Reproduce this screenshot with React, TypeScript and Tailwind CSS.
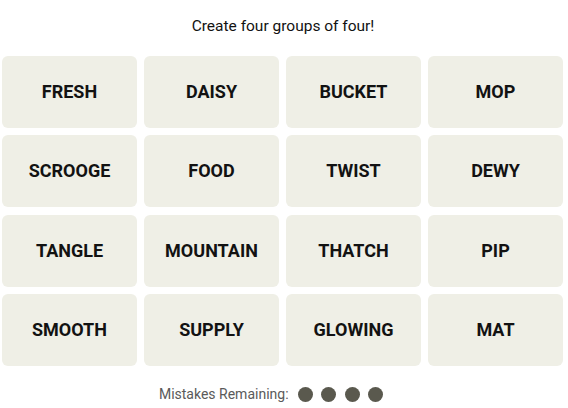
import React from "react";

const words = [
  "FRESH", "DAISY", "BUCKET", "MOP",
  "SCROOGE", "FOOD", "TWIST", "DEWY",
  "TANGLE", "MOUNTAIN", "THATCH", "PIP",
  "SMOOTH", "SUPPLY", "GLOWING", "MAT",
];

export default function App() {
  return (
    <div className="w-[568px] h-[408px] bg-white" style={{ fontFamily: "Roboto, 'Liberation Sans', sans-serif" }}>
      <div className="pt-[16px] pr-[2px] h-[56px] text-center text-[15.5px] leading-[20px] text-[#121212]">
        Create four groups of four!
      </div>
      <div className="pl-[2px] grid grid-cols-[repeat(4,135px)] grid-rows-[repeat(4,72px)] gap-x-[7px] gap-y-[7.33px]">
        {words.map((w) => (
          <div
            key={w}
            className="bg-[#efefe6] rounded-[6px] flex items-center justify-center text-[18px] font-bold text-[#121212] pb-[1px]"
          >
            {w}
          </div>
        ))}
      </div>
      <div className="mt-[21px] flex items-center justify-center h-[16px] pr-[26px]">
        <span className="text-[14px] text-[#5a5a5a] mr-[9px]">Mistakes Remaining:</span>
        <div className="flex gap-[8.5px]">
          <span className="w-[15px] h-[15px] rounded-full bg-[#5a594e]" />
          <span className="w-[15px] h-[15px] rounded-full bg-[#5a594e]" />
          <span className="w-[15px] h-[15px] rounded-full bg-[#5a594e]" />
          <span className="w-[15px] h-[15px] rounded-full bg-[#5a594e]" />
        </div>
      </div>
    </div>
  );
}
